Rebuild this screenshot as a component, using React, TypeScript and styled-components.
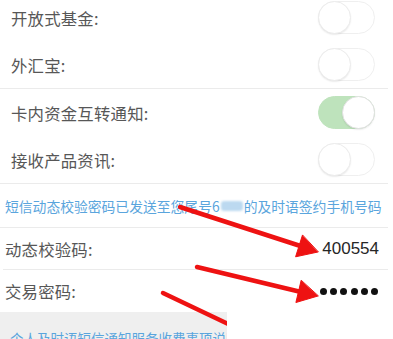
import React from "react";
import styled, { createGlobalStyle, css } from "styled-components";

const GlobalStyle = createGlobalStyle`
  html, body { margin: 0; padding: 0; background: #ffffff; }
  body { font-family: "Noto Sans CJK SC", "Noto Sans", sans-serif; }
`;

const Page = styled.div`
  position: relative;
  width: 393px;
  height: 339px;
  overflow: hidden;
  background: #ffffff;
`;

const Content = styled.div`
  display: flex;
  flex-direction: column;
  margin-top: -6px;
`;

const ToggleRow = styled.div`
  display: flex;
  align-items: center;
  justify-content: space-between;
  height: 47px;
  padding: 0 18px 0 11px;
`;

const Label = styled.span`
  font-size: 16.4px;
  color: #575757;
  letter-spacing: 0.2px;
`;

const Divider = styled.div<{ $inset?: number }>`
  height: 1px;
  background: #ebebeb;
  margin: 0 5px 0 ${(p) => p.$inset ?? 0}px;
`;

const Track = styled.div<{ $on?: boolean }>`
  position: relative;
  width: 57px;
  height: 33px;
  border-radius: 17px;
  box-sizing: border-box;
  border: 1px solid ${(p) => (p.$on ? "#bee3bc" : "#efefef")};
  background: ${(p) => (p.$on ? "#bee3bc" : "#ffffff")};
`;

const Knob = styled.div<{ $on?: boolean }>`
  position: absolute;
  top: -1px;
  width: 33px;
  height: 33px;
  border-radius: 50%;
  background: #ffffff;
  box-sizing: border-box;
  border: 1px solid #ececec;
  box-shadow: 0 1px 1.5px rgba(0, 0, 0, 0.08);
  ${(p) =>
    p.$on
      ? css`
          right: -1px;
          border-color: #e2e2e2;
        `
      : css`
          left: -1px;
        `}
`;

const Toggle = ({ on }: { on?: boolean }) => (
  <Track $on={on}>
    <Knob $on={on} />
  </Track>
);

const NoticeRow = styled.div`
  display: flex;
  align-items: center;
  height: 43px;
  padding-left: 5px;
  font-size: 13.8px;
  color: #5aa5dd;
  white-space: nowrap;
`;

const Blurred = styled.span`
  display: inline-block;
  width: 22px;
  height: 10px;
  margin: 0 1px;
  border-radius: 3px;
  background: #bcd9f0;
  filter: blur(1.2px);
`;

const FieldRow = styled.div<{ $h: number }>`
  display: flex;
  align-items: center;
  justify-content: space-between;
  height: ${(p) => p.$h}px;
  padding: 0 14px 0 5px;
`;

const Value = styled.span`
  font-family: "Liberation Sans", Arial, sans-serif;
  font-size: 17px;
  color: #262626;
`;

const Dots = styled.div`
  display: flex;
  gap: 3.2px;
  margin-right: 1px;
`;

const Dot = styled.span`
  width: 7px;
  height: 7px;
  border-radius: 50%;
  background: #111111;
`;

const Footer = styled.div`
  height: 40px;
  background: #efefef;
  padding: 19px 0 0 10px;
  box-sizing: border-box;
  font-size: 13.5px;
  line-height: 14px;
  color: #5aa5dd;
  white-space: nowrap;
`;

const Arrows = styled.svg`
  position: absolute;
  left: 0;
  top: 0;
  width: 393px;
  height: 339px;
  pointer-events: none;
`;

const Cover = styled.div`
  position: absolute;
  left: 227px;
  top: 312px;
  right: 0;
  bottom: 0;
  background: #ffffff;
`;

export default function App() {
  return (
    <>
      <GlobalStyle />
      <Page>
        <Content>
          <ToggleRow>
            <Label>开放式基金:</Label>
            <Toggle />
          </ToggleRow>
          <ToggleRow>
            <Label>外汇宝:</Label>
            <Toggle />
          </ToggleRow>
          <Divider />
          <ToggleRow>
            <Label>卡内资金互转通知:</Label>
            <Toggle on />
          </ToggleRow>
          <ToggleRow>
            <Label>接收产品资讯:</Label>
            <Toggle />
          </ToggleRow>
          <Divider />
          <NoticeRow>
            短信动态校验密码已发送至您尾号6<Blurred />的及时语签约手机号码
          </NoticeRow>
          <Divider />
          <FieldRow $h={41}>
            <Label>动态校验码:</Label>
            <Value>400554</Value>
          </FieldRow>
          <Divider $inset={3} />
          <FieldRow $h={42}>
            <Label>交易密码:</Label>
            <Dots>
              {Array.from({ length: 6 }).map((_, i) => (
                <Dot key={i} />
              ))}
            </Dots>
          </FieldRow>
          <Footer>个人及时语短信通知服务收费事项说明</Footer>
        </Content>
        <Arrows viewBox="0 0 393 339">
          <g fill="#ee1212" stroke="#ee1212" strokeLinecap="round" strokeLinejoin="round">
            <line x1="180" y1="207" x2="302" y2="246.5" strokeWidth="4.5" />
            <polygon points="318,252 295.6,256.8 302.4,235.3" strokeWidth="1" />
            <line x1="197" y1="267" x2="301" y2="292" strokeWidth="4.5" />
            <polygon points="318,296 295.9,302.5 301.1,280.6" strokeWidth="1" />
            <line x1="163" y1="293" x2="245" y2="332" strokeWidth="4.5" />
          </g>
        </Arrows>
        <Cover />
      </Page>
    </>
  );
}
